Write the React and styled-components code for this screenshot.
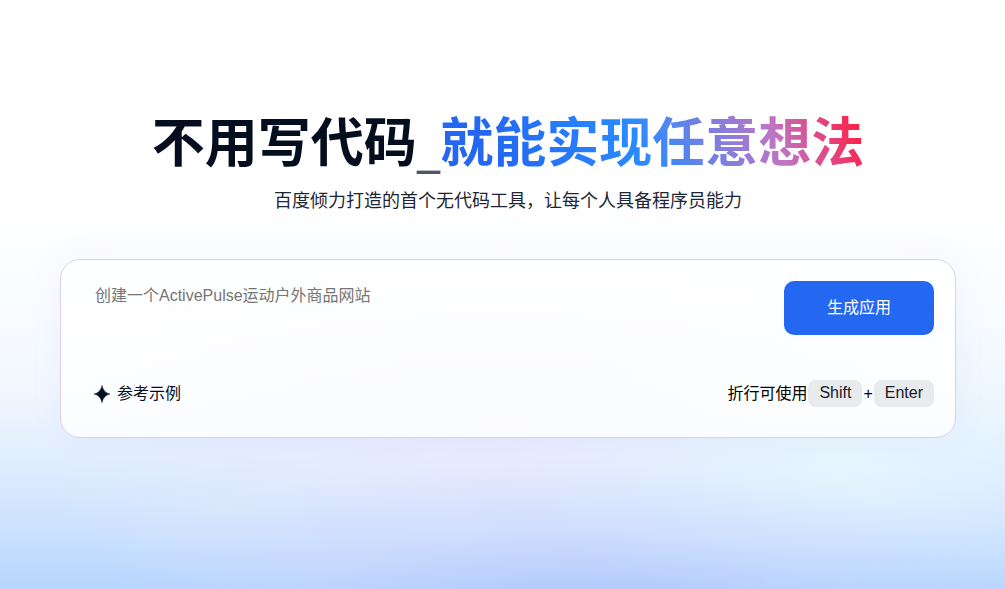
import React, { useState } from 'react'
import styled, { createGlobalStyle } from 'styled-components'

const GlobalStyle = createGlobalStyle`
  * {
    box-sizing: border-box;
  }

  body {
    margin: 0;
    font-family: "Liberation Sans", "Noto Sans CJK SC", sans-serif;
    font-size: 16px;
    color: #050e1f;
  }
`

const Page = styled.main`
  min-height: 100vh;
  padding: 109px 49px 40px 60px;
  background:
    radial-gradient(ellipse 50% 30% at 57% 108%, rgba(160, 186, 250, 0.75), rgba(176, 194, 254, 0.25) 60%, rgba(186, 200, 255, 0) 100%),
    radial-gradient(ellipse 34% 26% at 84% 78%, rgba(232, 248, 254, 0.75), rgba(230, 247, 254, 0.3) 55%, rgba(228, 246, 254, 0) 100%),
    radial-gradient(ellipse 46% 34% at 50% 78%, rgba(232, 234, 253, 0.85), rgba(230, 234, 253, 0.4) 60%, rgba(230, 234, 253, 0) 100%),
    linear-gradient(180deg, #ffffff 34%, #fafcff 50%, #f2f7ff 66%, #e2effe 77%, #cde2ff 89%, #b7d6fd 100%);
`

const Title = styled.h1`
  display: flex;
  justify-content: center;
  margin: 0;
  font-size: 53px;
  line-height: 70px;
  font-weight: 700;
`

const Cursor = styled.span`
  font-family: "Noto Sans", sans-serif;
  font-weight: 400;
  line-height: 74px;
  opacity: 0.7;
`

const Highlight = styled.span`
  background: linear-gradient(70deg, #2468f2 15%, #2a8cff 48%, #c074c4 78%, #ff1f45 98%);
  background-clip: text;
  -webkit-background-clip: text;
  color: transparent;
`

const Subtitle = styled.p`
  margin: 4px 0 44px;
  font-size: 18px;
  line-height: 28px;
  text-align: center;
  color: #1e2635;
`

const PromptCard = styled.form`
  display: flex;
  flex-direction: column;
  justify-content: space-between;
  gap: 45px;
  padding: 21px 21px 30px 33px;
  border: 1px solid #d8d0f0;
  border-radius: 20px;
  background: rgba(255, 255, 255, 0.8);
  box-shadow: 0 0 32px rgba(150, 130, 220, 0.08);
`

const Row = styled.div`
  display: flex;
  align-items: ${props => props.$align || 'center'};
  justify-content: space-between;
`

const PromptInput = styled.textarea`
  flex: 1;
  height: 54px;
  padding: 3px 1px;
  border: 0;
  outline: 0;
  resize: none;
  background: transparent;
  font: inherit;
  line-height: 24px;
  color: #050e1f;

  &::placeholder {
    color: #757575;
  }
`

const SubmitButton = styled.button`
  width: 150px;
  height: 54px;
  padding: 0 0 4px;
  border: 0;
  border-radius: 10px;
  background: #2468f2;
  font: inherit;
  color: #fff;
  cursor: pointer;
`

const Label = styled.span`
  padding-bottom: 3px;
`

const ExampleButton = styled.button`
  display: flex;
  align-items: center;
  gap: 7px;
  padding: 0;
  border: 0;
  background: none;
  font: inherit;
  color: #050e1f;
  cursor: pointer;
`

const Hint = styled.div`
  display: flex;
  align-items: center;
  gap: 1px;
  color: #000;
`

const Key = styled.kbd`
  padding: 0 11px 2px;
  border-radius: 8px;
  background: #e8eaec;
  font-family: inherit;
  line-height: 25px;
  color: #151b29;
`

const StarIcon = () => (
  <svg width="16" height="18" viewBox="0 0 16 18" aria-hidden="true">
    <path d="M8 0.4C9 5 11.400 8 16 9C11.400 10 9 13 8 17.600C7 13 4.600 10 0 9C4.600 8 7 5 8 0.400Z" fill="#050e1f" stroke="#050e1f" strokeWidth="0.5" />
  </svg>
)

export default function App() {
  const [prompt, setPrompt] = useState('')

  return (
    <Page>
      <GlobalStyle />
      <Title>
        <span>不用写代码</span>
        <Cursor>_</Cursor>
        <Highlight>就能实现任意想法</Highlight>
      </Title>
      <Subtitle>百度倾力打造的首个无代码工具，让每个人具备程序员能力</Subtitle>
      <PromptCard onSubmit={e => e.preventDefault()}>
        <Row $align="flex-start">
          <PromptInput
            aria-label="创建一个ActivePulse运动户外商品网站"
            placeholder="创建一个ActivePulse运动户外商品网站"
            value={prompt}
            onChange={e => setPrompt(e.target.value)}
          />
          <SubmitButton type="submit">生成应用</SubmitButton>
        </Row>
        <Row>
          <ExampleButton type="button">
            <StarIcon />
            <Label>参考示例</Label>
          </ExampleButton>
          <Hint>
            <Label>折行可使用</Label>
            <Key>Shift</Key>
            <span>+</span>
            <Key>Enter</Key>
          </Hint>
        </Row>
      </PromptCard>
    </Page>
  )
}
